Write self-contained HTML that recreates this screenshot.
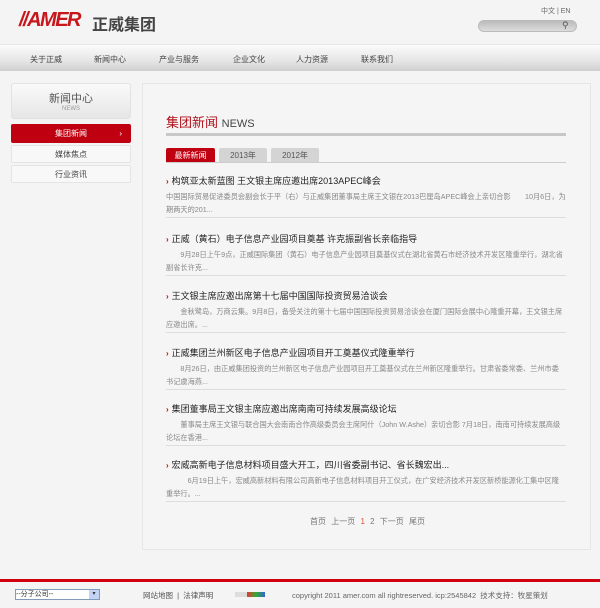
<!DOCTYPE html>
<html><head><meta charset="utf-8"><style>
*{margin:0;padding:0;box-sizing:border-box}
body{width:600px;height:608px;background:#f4f4f4;font-family:"Liberation Sans","Noto Sans CJK SC",sans-serif;position:relative;overflow:hidden;color:#333}
.a{position:absolute}
.nav{top:44px;left:0;width:600px;height:27px;background:linear-gradient(#fbfbfb,#e6e6e6 60%,#cfcfcf);border-top:1px solid #e8e8e8}
.nav span{position:absolute;top:9px;font-size:8px;color:#444}
.side{left:11px;top:83px;width:120px;height:36px;border:1px solid #e2e2e2;border-radius:3px;background:linear-gradient(#fafafa,#e6e6e6);text-align:center}
.mi{left:11px;width:120px;height:18px;font-size:8px;text-align:center;line-height:18px;border:1px solid #e4e4e4;background:#f8f8f8;color:#444;border-radius:2px}
.panel{left:142px;top:83px;width:449px;height:467px;border:1px solid #e6e6e6;background:#f5f5f5}
.tab{top:148px;height:15px;font-size:8px;line-height:15px;text-align:center;border-radius:2px 2px 0 0}
.it{left:166px;width:400px}
.it h3{font-size:9px;font-weight:normal;color:#222;height:12px;line-height:12px;white-space:nowrap}
.it h3 b{color:#c00;font-size:8px;margin-right:3px}
.it p{font-size:7.2px;color:#888;line-height:13px;margin-top:3px;height:28px;overflow:hidden;border-bottom:1px solid #ddd;word-break:break-all}
</style></head><body>
<div class="a" style="left:19px;top:9px;font:italic bold 20px 'Liberation Sans',sans-serif;color:#c8161d;letter-spacing:-1.5px">//AMER</div>
<div class="a" style="left:92px;top:11px;font-size:16px;font-weight:bold;color:#444">正威集团</div>
<div class="a" style="left:541px;top:6px;font-size:7px;color:#666">中文 | EN</div>
<div class="a" style="left:478px;top:20px;width:99px;height:12px;border-radius:6px;background:linear-gradient(#bbb,#ddd);border:1px solid #bbb"></div>
<div class="a" style="left:562px;top:20px;font-size:9px;color:#555">⚲</div>
<div class="a nav">
<span style="left:30px">关于正威</span><span style="left:94px">新闻中心</span><span style="left:159px">产业与服务</span><span style="left:233px">企业文化</span><span style="left:296px">人力资源</span><span style="left:361px">联系我们</span></div>
<div class="a side"><div style="font-size:11px;color:#555;margin-top:6px">新闻中心</div><div style="font-size:6px;color:#999">NEWS</div></div>
<div class="a mi" style="top:124px;background:#bf0010;color:#fff;border-color:#bf0010;height:19px">集团新闻<span style="position:absolute;right:8px">›</span></div>
<div class="a mi" style="top:145px">媒体焦点</div>
<div class="a mi" style="top:165px">行业资讯</div>
<div class="a panel"></div>
<div class="a" style="left:166px;top:112px;font-size:13px;color:#b0101a">集团新闻 <span style="color:#444;font-size:11px">NEWS</span></div>
<div class="a" style="left:166px;top:133px;width:400px;height:3px;background:#c8c8c8"></div>
<div class="a tab" style="left:166px;width:49px;background:#bf0010;color:#fff">最新新闻</div>
<div class="a tab" style="left:219px;width:48px;background:#d4d4d4;color:#555">2013年</div>
<div class="a tab" style="left:271px;width:48px;background:#d4d4d4;color:#555">2012年</div>
<div class="a" style="left:166px;top:162px;width:400px;height:1px;background:#ccc"></div>
<div class="a it" style="top:175px"><h3><b>›</b>构筑亚太新蓝图 王文银主席应邀出席2013APEC峰会</h3><p>中国国际贸易促进委员会副会长于平（右）与正威集团董事局主席王文银在2013巴厘岛APEC峰会上亲切合影　　10月6日，为期两天的201...</p></div>
<div class="a it" style="top:233px"><h3><b>›</b>正威（黄石）电子信息产业园项目奠基 许克振副省长亲临指导</h3><p>　　9月28日上午9点，正威国际集团（黄石）电子信息产业园项目奠基仪式在湖北省黄石市经济技术开发区隆重举行，湖北省副省长许克...</p></div>
<div class="a it" style="top:290px"><h3><b>›</b>王文银主席应邀出席第十七届中国国际投资贸易洽谈会</h3><p>　　金秋鹭岛，万商云集。9月8日，备受关注的第十七届中国国际投资贸易洽谈会在厦门国际会展中心隆重开幕，王文银主席应邀出席。...</p></div>
<div class="a it" style="top:347px"><h3><b>›</b>正威集团兰州新区电子信息产业园项目开工奠基仪式隆重举行</h3><p>　　8月26日，由正威集团投资的兰州新区电子信息产业园项目开工奠基仪式在兰州新区隆重举行。甘肃省委常委、兰州市委书记虞海燕...</p></div>
<div class="a it" style="top:403px"><h3><b>›</b>集团董事局王文银主席应邀出席南南可持续发展高级论坛</h3><p>　　董事局主席王文银与联合国大会南南合作高级委员会主席阿什（John W.Ashe）亲切合影 7月18日，南南可持续发展高级论坛在香港...</p></div>
<div class="a it" style="top:459px"><h3><b>›</b>宏威高新电子信息材料项目盛大开工，四川省委副书记、省长魏宏出...</h3><p>　　　6月19日上午，宏威高新材料有限公司高新电子信息材料项目开工仪式，在广安经济技术开发区新桥能源化工集中区隆重举行。...</p></div>
<div class="a" style="left:310px;top:516px;font-size:8px;color:#777;word-spacing:3px">首页 上一页 <span style="color:#e05030">1</span> 2 下一页 尾页</div>
<div class="a" style="left:0;top:579px;width:600px;height:3px;background:#d0000f"></div>
<div class="a" style="left:15px;top:589px;width:85px;height:11px;border:1px solid #7f9db9;background:#fff;font-size:7px;line-height:9px;color:#333">--分子公司--<span style="position:absolute;right:0;top:0;width:10px;height:9px;background:#c3d3f3;font-size:6px;text-align:center">▾</span></div>
<div class="a" style="left:143px;top:590px;font-size:7.5px;color:#555">网站地图 &nbsp;| &nbsp;法律声明</div>
<div class="a" style="left:235px;top:592px;width:30px;height:5px;background:linear-gradient(90deg,#ddd 40%,#e33 40%,#3a3 70%,#36c)"></div>
<div class="a" style="left:292px;top:590px;font-size:7.5px;color:#666">copyright 2011 amer.com all rightreserved. icp:2545842 &nbsp;技术支持：牧星策划</div>
</body></html>
